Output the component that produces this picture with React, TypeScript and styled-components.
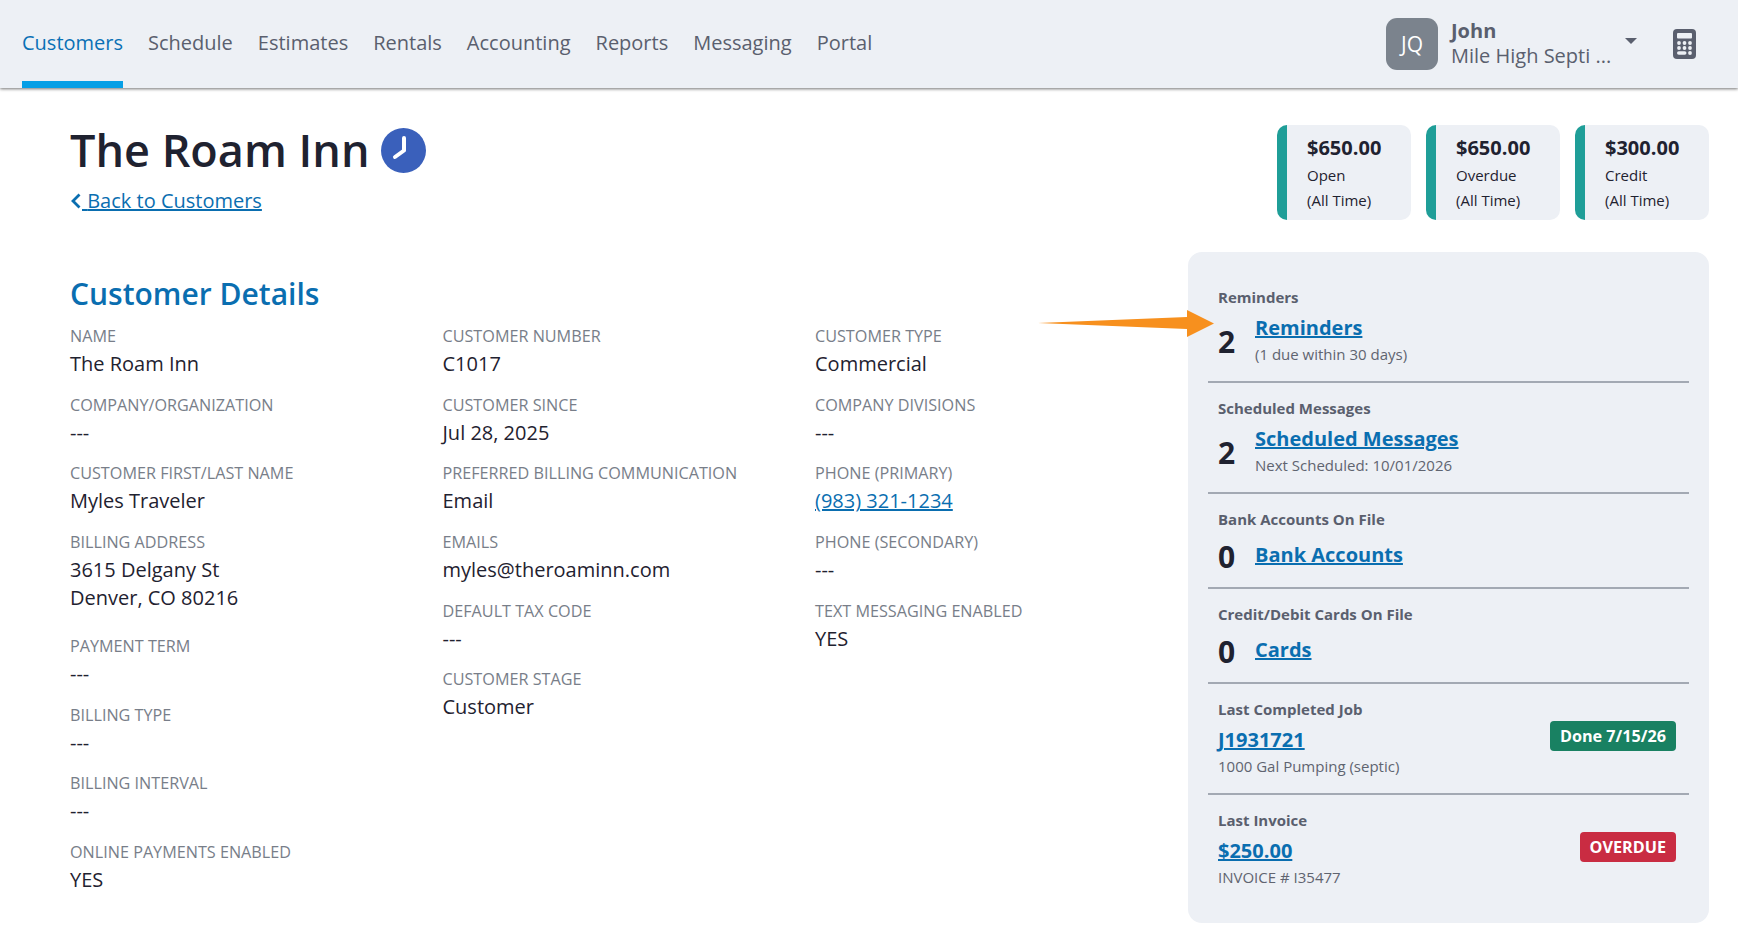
import { FC, ReactNode } from "react";
import styled, { createGlobalStyle } from "styled-components";

const GlobalStyle = createGlobalStyle`
  html, body {
    margin: 0;
    background: #ffffff;
    font-family: "Open Sans", "Noto Sans", sans-serif;
    color: #1f2230;
  }
  * { box-sizing: border-box; }
`;

const TopBar = styled.header`
  height: 88px;
  background: #edf0f5;
  box-shadow: 0 1px 3px rgba(0, 0, 0, 0.55);
  display: flex;
  justify-content: space-between;
  padding: 0 42px 0 22px;
`;

const Nav = styled.nav`
  display: flex;
  gap: 25px;
`;

const NavItem = styled.a<{ $active?: boolean }>`
  height: 88px;
  line-height: 86px;
  font-size: 20px;
  color: ${({ $active }) => ($active ? "#0a70b5" : "#5a5f6e")};
  border-bottom: 7px solid ${({ $active }) => ($active ? "#069fe6" : "transparent")};
`;

const UserArea = styled.div`
  display: flex;
  align-items: center;
`;

const Avatar = styled.div`
  width: 52px;
  height: 52px;
  border-radius: 11px;
  background: #7b838d;
  color: #ffffff;
  font-size: 21px;
  display: flex;
  align-items: center;
  justify-content: center;
  margin-right: 13px;
`;

const UserText = styled.div`
  width: 168px;
  color: #5a5f6e;
  font-size: 20px;
  line-height: 25px;
  margin-top: -2px;
`;

const UserName = styled.div`
  font-weight: 700;
`;

const Caret = styled.span`
  width: 0;
  height: 0;
  border-left: 6px solid transparent;
  border-right: 6px solid transparent;
  border-top: 6px solid #5a5f6e;
  margin: 0 36px 0 6px;
  position: relative;
  top: -3px;
`;

const CalcIcon = styled.svg`
  width: 23px;
  height: 30px;
`;

const Page = styled.main`
  position: relative;
  padding: 37px 29px 0 70px;
`;

const HeadRow = styled.div`
  display: flex;
  justify-content: space-between;
`;

const TitleRow = styled.div`
  display: flex;
  align-items: center;
  gap: 12px;
  height: 50px;
`;

const Title = styled.h1`
  margin: 0;
  font-size: 45px;
  line-height: 50px;
  font-weight: 600;
`;

const ClockBadge = styled.svg`
  width: 45px;
  height: 45px;
`;

const BackLink = styled.a`
  display: block;
  margin-top: 12px;
  font-size: 20px;
  line-height: 27px;
  color: #0a6eb0;
  text-decoration: underline;
  text-decoration-thickness: 2px;
`;

const BackIcon = styled.svg`
  width: 12px;
  height: 16px;
  vertical-align: -1px;
`;

const Stats = styled.div`
  display: flex;
  gap: 15px;
`;

const StatCard = styled.div`
  width: 134px;
  height: 95px;
  background: #edf0f5;
  border-left: 10px solid #1f9e98;
  border-radius: 10px;
  padding: 9px 0 0 20px;
`;

const StatAmount = styled.div`
  font-size: 20px;
  font-weight: 700;
  line-height: 27px;
  margin-bottom: 2px;
`;

const StatLine = styled.div`
  font-size: 15px;
  line-height: 25px;
`;

const Body = styled.div`
  display: flex;
  justify-content: space-between;
  margin-top: 32px;
`;

const Details = styled.section`
  width: 1100px;
`;

const SectionTitle = styled.h2`
  margin: 24px 0 0;
  font-size: 30px;
  line-height: 36px;
  font-weight: 600;
  color: #0a6eb0;
`;

const Columns = styled.div`
  display: grid;
  grid-template-columns: repeat(3, 372.5px);
  margin-top: 11px;
`;

const Field = styled.div<{ $tall?: boolean }>`
  height: ${({ $tall }) => ($tall ? "104px" : "68.7px")};
`;

const FieldLabel = styled.div`
  font-size: 16.2px;
  line-height: 27px;
  color: #787e89;
  text-transform: uppercase;
`;

const FieldValue = styled.div`
  font-size: 20px;
  line-height: 28px;
  color: #1f2230;
`;

const ValueLink = styled.a`
  color: #0a6eb0;
  text-decoration: underline;
  text-decoration-thickness: 1.5px;
`;

const SidePanel = styled.aside`
  width: 521px;
  height: 671px;
  background: #edf0f5;
  border-radius: 14px;
  padding: 25px 20px 0;
`;

const PanelSection = styled.div<{ $height: number }>`
  height: ${({ $height }) => $height}px;
  padding: 14px 10px 0;
  border-bottom: 2px solid #a3a9b3;

  &:first-child {
    padding-top: 9px;
  }
  &:last-child {
    border-bottom: none;
  }
`;

const PanelLabel = styled.div`
  font-size: 15px;
  line-height: 22px;
  font-weight: 700;
  color: #5a5f6e;
`;

const CountRow = styled.div<{ $single?: boolean }>`
  display: flex;
  align-items: center;
  gap: 18px;
  margin-top: ${({ $single }) => ($single ? "2px" : "5px")};
`;

const Count = styled.div`
  font-size: 30px;
  line-height: 40px;
  font-weight: 700;
  width: 19px;
  margin-top: 5px;
`;

const PanelLink = styled.a`
  display: block;
  font-size: 20px;
  line-height: 30px;
  font-weight: 700;
  color: #0a6eb0;
  text-decoration: underline;
  text-decoration-thickness: 2px;
`;

const PanelNote = styled.div`
  font-size: 15px;
  line-height: 23px;
  color: #5f6470;
`;

const SplitRow = styled.div`
  display: flex;
  justify-content: space-between;
  align-items: flex-start;
  padding-right: 3px;
  margin-top: 5px;
`;

const Badge = styled.span<{ $color: string }>`
  background: ${({ $color }) => $color};
  color: #ffffff;
  font-size: 16.2px;
  font-weight: 700;
  line-height: 22px;
  padding: 4px 10px;
  border-radius: 4px;
  margin-top: -4px;
`;

const ArrowMark = styled.svg`
  position: absolute;
  left: 1038px;
  top: 221px;
  width: 178px;
  height: 30px;
`;

interface FieldData {
  label: string;
  value: ReactNode;
  tall?: boolean;
}

const columnOne: FieldData[] = [
  { label: "Name", value: "The Roam Inn" },
  { label: "Company/Organization", value: "---" },
  { label: "Customer First/Last Name", value: "Myles Traveler" },
  {
    label: "Billing Address",
    value: (
      <>
        3615 Delgany St
        <br />
        Denver, CO 80216
      </>
    ),
    tall: true,
  },
  { label: "Payment Term", value: "---" },
  { label: "Billing Type", value: "---" },
  { label: "Billing Interval", value: "---" },
  { label: "Online Payments Enabled", value: "YES" },
];

const columnTwo: FieldData[] = [
  { label: "Customer Number", value: "C1017" },
  { label: "Customer Since", value: "Jul 28, 2025" },
  { label: "Preferred Billing Communication", value: "Email" },
  { label: "Emails", value: "myles@theroaminn.com" },
  { label: "Default Tax Code", value: "---" },
  { label: "Customer Stage", value: "Customer" },
];

const columnThree: FieldData[] = [
  { label: "Customer Type", value: "Commercial" },
  { label: "Company Divisions", value: "---" },
  { label: "Phone (Primary)", value: <ValueLink>(983) 321-1234</ValueLink> },
  { label: "Phone (Secondary)", value: "---" },
  { label: "Text Messaging Enabled", value: "YES" },
];

const navItems = ["Customers", "Schedule", "Estimates", "Rentals", "Accounting", "Reports", "Messaging", "Portal"];

const stats = [
  { amount: "$650.00", label: "Open" },
  { amount: "$650.00", label: "Overdue" },
  { amount: "$300.00", label: "Credit" },
];

const calcKeys = [
  [6, 14],
  [11.5, 14],
  [17, 14],
  [6, 19],
  [11.5, 19],
  [17, 19],
  [17, 24],
];

const FieldColumn: FC<{ fields: FieldData[] }> = ({ fields }) => (
  <div>
    {fields.map((field) => (
      <Field key={field.label} $tall={field.tall}>
        <FieldLabel>{field.label}</FieldLabel>
        <FieldValue>{field.value}</FieldValue>
      </Field>
    ))}
  </div>
);

const App: FC = () => (
  <>
    <GlobalStyle />
    <TopBar>
      <Nav>
        {navItems.map((item, i) => (
          <NavItem key={item} $active={i === 0}>
            {item}
          </NavItem>
        ))}
      </Nav>
      <UserArea>
        <Avatar>JQ</Avatar>
        <UserText>
          <UserName>John</UserName>
          <div>Mile High Septi ...</div>
        </UserText>
        <Caret />
        <CalcIcon viewBox="0 0 23 30">
          <rect width="23" height="30" rx="4" fill="#5a5f6e" />
          <rect x="4" y="4" width="15" height="5.5" rx="1" fill="#edf0f5" />
          {calcKeys.map(([cx, cy]) => (
            <circle key={`${cx}-${cy}`} cx={cx} cy={cy} r="1.9" fill="#edf0f5" />
          ))}
          <rect x="4" y="22.2" width="9.5" height="3.6" rx="1.8" fill="#edf0f5" />
        </CalcIcon>
      </UserArea>
    </TopBar>
    <Page>
      <HeadRow>
        <div>
          <TitleRow>
            <Title>The Roam Inn</Title>
            <ClockBadge viewBox="0 0 45 45">
              <circle cx="22.5" cy="22.5" r="22.5" fill="#3a60bb" />
              <path d="M23 10 V22.5 L14 29" fill="none" stroke="#ffffff" strokeWidth="4" strokeLinecap="round" strokeLinejoin="round" />
            </ClockBadge>
          </TitleRow>
          <BackLink>
            <BackIcon viewBox="0 0 12 16">
              <path d="M9.5 1.5 L3 8 L9.5 14.5" fill="none" stroke="#0a6eb0" strokeWidth="2.8" />
            </BackIcon>{" "}
            Back to Customers
          </BackLink>
        </div>
        <Stats>
          {stats.map((stat) => (
            <StatCard key={stat.label}>
              <StatAmount>{stat.amount}</StatAmount>
              <StatLine>{stat.label}</StatLine>
              <StatLine>(All Time)</StatLine>
            </StatCard>
          ))}
        </Stats>
      </HeadRow>
      <Body>
        <Details>
          <SectionTitle>Customer Details</SectionTitle>
          <Columns>
            <FieldColumn fields={columnOne} />
            <FieldColumn fields={columnTwo} />
            <FieldColumn fields={columnThree} />
          </Columns>
        </Details>
        <SidePanel>
          <PanelSection $height={106}>
            <PanelLabel>Reminders</PanelLabel>
            <CountRow>
              <Count>2</Count>
              <div>
                <PanelLink>Reminders</PanelLink>
                <PanelNote>(1 due within 30 days)</PanelNote>
              </div>
            </CountRow>
          </PanelSection>
          <PanelSection $height={111}>
            <PanelLabel>Scheduled Messages</PanelLabel>
            <CountRow>
              <Count>2</Count>
              <div>
                <PanelLink>Scheduled Messages</PanelLink>
                <PanelNote>Next Scheduled: 10/01/2026</PanelNote>
              </div>
            </CountRow>
          </PanelSection>
          <PanelSection $height={95}>
            <PanelLabel>Bank Accounts On File</PanelLabel>
            <CountRow $single>
              <Count>0</Count>
              <PanelLink>Bank Accounts</PanelLink>
            </CountRow>
          </PanelSection>
          <PanelSection $height={95}>
            <PanelLabel>Credit/Debit Cards On File</PanelLabel>
            <CountRow $single>
              <Count>0</Count>
              <PanelLink>Cards</PanelLink>
            </CountRow>
          </PanelSection>
          <PanelSection $height={111}>
            <PanelLabel>Last Completed Job</PanelLabel>
            <SplitRow>
              <div>
                <PanelLink>J1931721</PanelLink>
                <PanelNote>1000 Gal Pumping (septic)</PanelNote>
              </div>
              <Badge $color="#198162">Done 7/15/26</Badge>
            </SplitRow>
          </PanelSection>
          <PanelSection $height={111}>
            <PanelLabel>Last Invoice</PanelLabel>
            <SplitRow>
              <div>
                <PanelLink>$250.00</PanelLink>
                <PanelNote>INVOICE # I35477</PanelNote>
              </div>
              <Badge $color="#c92c42">OVERDUE</Badge>
            </SplitRow>
          </PanelSection>
        </SidePanel>
      </Body>
      <ArrowMark viewBox="0 0 178 30">
        <path d="M0 14 L149 8 L149 1 L176 14.5 L149 28 L149 20 Z" fill="#f7901e" />
      </ArrowMark>
    </Page>
  </>
);

export default App;
